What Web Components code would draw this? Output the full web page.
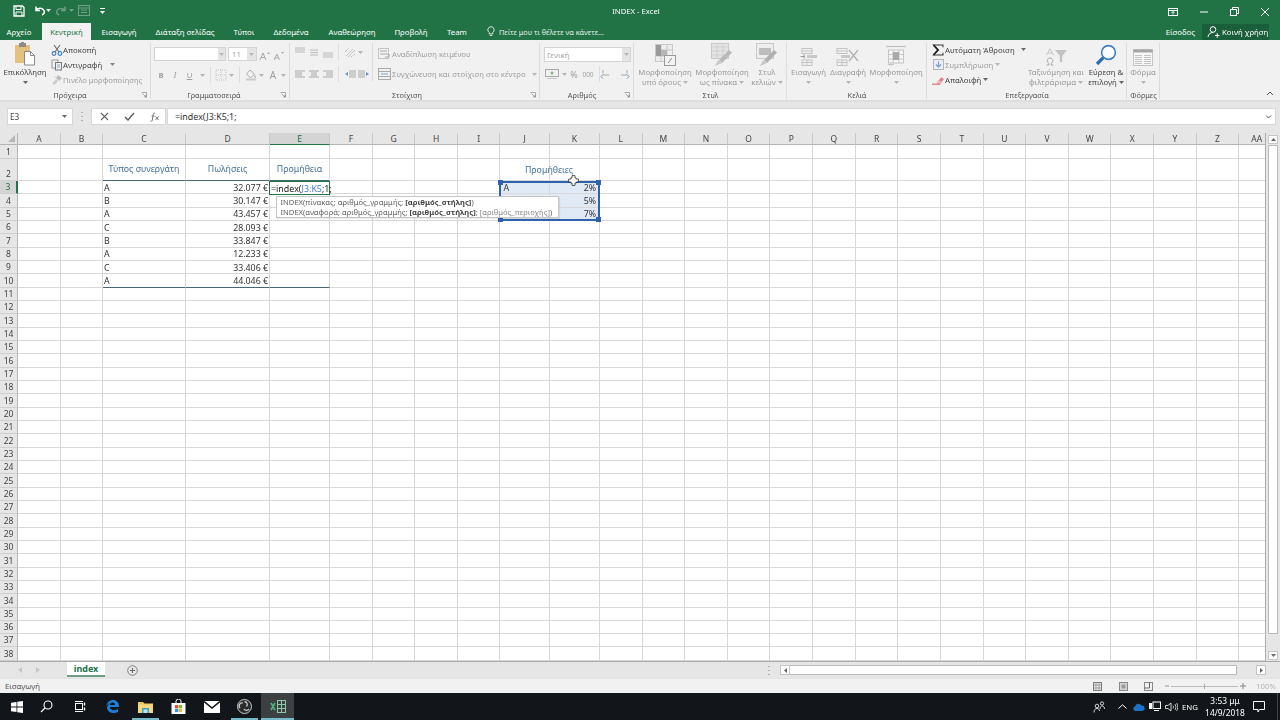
<!DOCTYPE html>
<html lang="el"><head><meta charset="utf-8"><title>INDEX - Excel</title>
<style>
html,body{margin:0;padding:0;width:1280px;height:720px;overflow:hidden;background:#f1f1f1;font-family:"Noto Sans","Liberation Sans",sans-serif}
</style></head><body>
<x-app></x-app>
<script>
const sv=(w,h,c)=>`<svg xmlns="http://www.w3.org/2000/svg" viewBox="0 0 ${w} ${h}" width="${w}" height="${h}" fill="none">${c}</svg>`;
const D='#a9a9a9',L='#c4c4c4',K='#5a5a5a';
const lines=(x1,x2,ys,c=D,sw=1)=>ys.map(y=>`<path d="M${x1} ${y}H${x2}" stroke="${c}" stroke-width="${sw}"/>`).join('');
const ICONS={
save:sv(12,12,'<path d="M1 1h8.5L11 2.5V11H1z" stroke="#fff" stroke-width="1.3"/><path d="M3 1.5v3h5v-3M3 11V7h6v4" stroke="#fff"/>'),
undo:sv(13,11,'<path d="M3 1.5v4h4M3.2 5.2C5 2.8 9.5 2.6 11 5.5c.8 2-.3 3.8-2 4.5" stroke="#fff" stroke-width="1.5"/>'),
redo:sv(13,11,'<path d="M10 1.5v4H6M9.8 5.2C8 2.8 3.5 2.6 2 5.5c-.8 2 .3 3.8 2 4.5" stroke="#6f9f84" stroke-width="1.4"/>'),
formq:sv(12,11,'<rect x=".5" y=".5" width="11" height="10" stroke="#6f9f84"/><path d="M.5 3h11M3 5h6M3 7.5h6" stroke="#6f9f84"/>'),
custom:sv(7,8,'<path d="M1 1.5h5" stroke="#fff"/><path d="M1 4h5L3.5 7z" fill="#fff"/>'),
dropw:sv(5,3,'<path d="M0 0h5L2.5 3z" fill="#e6efe9"/>'),
dropq:sv(5,3,'<path d="M0 0h5L2.5 3z" fill="#6f9f84"/>'),
drop:sv(5,3,'<path d="M0 0h5L2.5 3z" fill="#888"/>'),
dropd:sv(5,3,'<path d="M0 0h5L2.5 3z" fill="#666"/>'),
dropl:sv(5,3,'<path d="M0 0h5L2.5 3z" fill="#b5b5b5"/>'),
ribdisp:sv(10,8,'<rect x=".5" y=".5" width="9" height="7" stroke="#fff"/><path d="M.5 2.5h9" stroke="#fff"/><path d="M5 3.5v3M3.5 5 5 3.5 6.500 5" stroke="#fff" stroke-width=".9"/>'),
min:sv(10,2,'<path d="M1 1h8" stroke="#fff"/>'),
rest:sv(9,9,'<rect x=".5" y="2.500" width="6" height="6" stroke="#fff"/><path d="M2.500 2.500v-2h6v6h-2" stroke="#fff"/>'),
close:sv(10,10,'<path d="M1 1l8 8M9 1 1 9" stroke="#fff"/>'),
bulb:sv(8,11,'<path d="M4 .7a3.200 3.200 0 0 0-1.700 5.900V8h3.400V6.600A3.200 3.200 0 0 0 4 .7zM2.800 9.500h2.400" stroke="#fff" stroke-width=".8"/>'),
share:sv(13,12,'<circle cx="6" cy="3.500" r="2.800" stroke="#fff"/><path d="M1 11c.4-3 2.400-4.500 5-4.500" stroke="#fff"/><path d="M8 9.500h4.500M10.200 7.200v4.600" stroke="#fff"/>'),
paste:sv(22,24,'<rect x="1" y="3" width="15" height="18" fill="#e2c27c"/><rect x="5" y="1" width="7" height="4" fill="#8b8b8b"/><rect x="7" y="0" width="3" height="2" fill="#8b8b8b"/><path d="M10.500 9.500h6l4 4v9.500h-10z" fill="#fff" stroke="#8a8a8a"/><path d="M16.500 9.500v4h4" stroke="#8a8a8a"/>'),
cut:sv(12,12,'<path d="M3 1l5 7M9 1 4 8" stroke="#6b6b6b" stroke-width="1.100"/><circle cx="3" cy="9.500" r="1.900" stroke="#3b7cc0" stroke-width="1.100"/><circle cx="9" cy="9.500" r="1.900" stroke="#3b7cc0" stroke-width="1.100"/>'),
copy:sv(12,12,'<rect x="1" y="1" width="6" height="8" stroke="#9a9a9a"/><rect x="4.500" y="3.500" width="6" height="7.500" fill="#f1f1f1" stroke="#777"/><path d="M6 6h3M6 8h3" stroke="#8aa8c8"/>'),
brush:sv(12,12,'<path d="M7 1l4 3-3 3-3-3z" fill="#bcbcbc"/><path d="M5 5 1.500 9.500 3 11l4-3.500z" fill="#c9c9c9"/><path d="M3 3h2" stroke="#d3d3d3"/>'),
Aup:sv(11,10,`<path d="M1 9 4 2l3 7M2 6.500h4" stroke="${D}"/><path d="M8 3l1.500-2L11 3z" fill="${D}"/>`),
Adn:sv(11,10,`<path d="M1 9 3.800 3 6.500 9M2 7h3.500" stroke="${D}"/><path d="M8 1l1.500 2L11 1z" fill="${D}"/>`),
border:sv(12,12,`<rect x="1" y="1" width="10" height="10" stroke="${L}" stroke-dasharray="1 1"/><path d="M6 1v10M1 6h10" stroke="${L}" stroke-dasharray="1 1"/>`),
fill:sv(12,12,`<path d="M5 1 1.500 5 5.500 9 9.500 5z" stroke="${D}"/><path d="M10 6l1 2-1 1-1-1z" fill="${D}"/><path d="M1 10.500h10" stroke="#c9c9c9" stroke-width="2"/>`),
al1:sv(12,11,lines(1,11,[1,3,5],L,1.200)),
al2:sv(12,11,lines(2,10,[3,5.500,8],L,1.200)),
al3:sv(12,11,lines(1,11,[6,8,10],L,1.200)),
orient:sv(12,11,`<path d="M2 9 9 2M4 10l7-7" stroke="${L}"/><path d="M1 5l4-4M7 10l4-3" stroke="${D}" stroke-dasharray="1 1"/>`),
la:sv(12,9,lines(1,11,[1,7],D)+lines(1,8,[3,5],D)),
ca:sv(12,9,lines(1,11,[1,7],D)+lines(3,9,[3,5],D)),
ra:sv(12,9,lines(1,11,[1,7],D)+lines(4,11,[3,5],D)),
outd:sv(13,9,lines(5,12,[1,3,5,7],D)+'<path d="M4 2v4L1 4z" fill="#6b93bf"/>'),
ind:sv(13,9,lines(1,8,[1,3,5,7],D)+'<path d="M9 2v4l3-2z" fill="#6b93bf"/>'),
wrap:sv(13,12,`<rect x=".5" y=".5" width="10" height="10" stroke="${L}"/><path d="M2 3h7M2 6h8a1.500 1.500 0 0 1 0 3H7" stroke="${D}"/>`),
merge:sv(13,12,`<rect x=".5" y=".5" width="12" height="11" stroke="${D}"/><path d="M.5 3.500h12M.5 8.500h12" stroke="${D}"/><path d="M3 6h7" stroke="#7fa6cc"/>`),
acct:sv(14,10,`<rect x=".5" y=".5" width="13" height="7" stroke="${D}"/><circle cx="7" cy="4" r="1.500" fill="#8bb48b"/><path d="M2 9.500h10" stroke="${L}"/>`),
dec1:sv(13,10,`<path d="M3 1v3.500M3 6h6" stroke="${D}"/><path d="M1 7.500 3 9.500M1 7.500l2-2" stroke="#6b93bf"/>`),
dec2:sv(13,10,`<path d="M9 1v3.500M3 6h6" stroke="${D}"/><path d="M11 7.500 9 9.500M11 7.500l-2-2" stroke="#6b93bf"/>`),
cond:sv(21,22,`<rect x=".5" y=".5" width="17" height="17" fill="#ededed" stroke="#c8c8c8"/><path d="M6 .5v17M12 .5v17M.5 6h17M.5 12h17" stroke="#c8c8c8"/><rect x="1" y="1" width="5" height="11" fill="#9a9a9a"/><rect x="6" y="6" width="6" height="6" fill="#b5b5b5"/><rect x="9.500" y="11.500" width="11" height="10" fill="#f4f4f4" stroke="#9a9a9a"/><path d="M13 19l4-5" stroke="#8a8a8a"/>`),
tbl:sv(22,23,`<rect x=".5" y=".5" width="17" height="15" fill="#e4e4e4" stroke="#c8c8c8"/><path d="M6 .5v15M12 .5v15M.5 4h17M.5 8h17M.5 12h17" stroke="#cfcfcf"/><path d="M8 17 18 7l3 2.500L11 20z" fill="#b9b9b9"/><path d="M4 23l3-6 4 3z" fill="#c9c9c9"/>`),
cst:sv(22,23,`<rect x=".5" y=".5" width="17" height="15" fill="#eee" stroke="#c8c8c8"/><rect x="3" y="5" width="12" height="7" fill="#bdbdbd"/><path d="M8 17 18 7l3 2.500L11 20z" fill="#b0b0b0"/><path d="M4 23l3-6 4 3z" fill="#c9c9c9"/>`),
ins:sv(19,18,`<rect x="3" y=".5" width="10" height="5" stroke="${L}"/><path d="M3 3h10" stroke="${L}"/><rect x="3" y="12" width="10" height="5.500" stroke="${L}"/><path d="M8 12v5.500M3 14.500h10" stroke="${L}"/><rect x="8" y="7" width="10" height="3" fill="#c9c9c9"/><path d="M5 6.500v4M1.500 8.500H6" stroke="#9a9a9a"/>`),
del:sv(24,18,`<rect x="1" y=".5" width="10" height="5" stroke="${L}"/><path d="M1 3h10" stroke="${L}"/><rect x="1" y="12" width="10" height="5.500" stroke="${L}"/><path d="M6 12v5.500M1 14.500h10" stroke="${L}"/><rect x="5" y="7" width="9" height="3" fill="#c9c9c9"/><path d="M13 2l9 11M22 2 13 13" stroke="#b0b0b0" stroke-width="1.200"/>`),
fmt:sv(20,21,`<path d="M1 1.500h18M1 .5v2M19 .5v2M4 1.500h12" stroke="#bbb"/><rect x="2.500" y="5" width="15" height="13" fill="#f6f6f6" stroke="${L}"/><path d="M7 5v13M13 5v13M2.500 9.500h15M2.500 14h15" stroke="${L}"/><rect x="7" y="7" width="6" height="8" fill="#a8a8a8"/><path d="M2 19q3 2 6 0" stroke="#bbb"/>`),
sum:sv(12,12,'<path d="M1 1h10v2.200M11 1H1.500L6 6 1.500 11H11V8.800" stroke="#3a3a3a" stroke-width="1.100"/><path d="M1.500 1 6 6l-4.500 5" stroke="#222" stroke-width="1.800"/>'),
fildn:sv(11,11,'<rect x=".5" y=".5" width="10" height="10" fill="#e8eef6" stroke="#b5b5b5"/><path d="M5.500 2.500v5M3 5.500l2.500 2.500L8 5.500" stroke="#7d9cbf" stroke-width="1.200"/>'),
eraser:sv(13,10,'<path d="M5 8 10 2l3 2-4 5H6z" fill="#e3818c"/><path d="M5 8l2-3 3 2-1.500 2H6z" fill="#f0bcc2"/><path d="M0 9.500h9" stroke="#c94b5a"/>'),
sort:sv(23,18,`<path d="M1.500 7 5 .8 8.500 7M3 5h4" stroke="${L}"/><path d="M1.500 17h2.300v-1.500C1 13.500 2 10 5 10s4 3.500 1.200 5.500V17h2.300" stroke="${D}"/><path d="M10 2h12l-4.800 6v6h-2.400V8z" fill="#c2c2c2"/>`),
find:sv(22,22,'<circle cx="13.500" cy="8.500" r="6.900" stroke="#3f7fbf" stroke-width="1.600" fill="#fbfbfb"/><path d="M8.300 13.700 2 20" stroke="#2b6cb0" stroke-width="3.200"/>'),
form:sv(20,17,`<rect x=".5" y=".5" width="19" height="16" fill="#f7f7f7" stroke="${L}"/><rect x=".5" y=".5" width="19" height="3" fill="#a5a5a5"/>`+lines(2,9,[6.500,8.500,10.500,12.500,14.500],L)+lines(11,18,[6.500,8.500,10.500,12.500,14.500],L)),
launch:sv(6,6,'<path d="M.5.500h5v5" stroke="#aaa"/><path d="M1.500 1.500 5 5M5 3v2H3" stroke="#888" stroke-width=".7"/>'),
collapse:sv(8,5,'<path d="M1 4l3-3 3 3" stroke="#555"/>'),
x:sv(9,9,'<path d="M1 1l7 7M8 1 1 8" stroke="#666" stroke-width="1.100"/>'),
ok:sv(11,9,'<path d="M1 5l3 3 6-7" stroke="#555" stroke-width="1.300"/>'),
fx:sv(11,10,'<path d="M6 1C4.500 .7 4.300 2 4 4L3.300 8C3 9.300 2.400 9.500 1.500 9M2.500 4h3M6.500 4.500l3 3.500M9.500 4.500l-3 3.500" stroke="#666" stroke-width=".9"/>'),
chev:sv(7,4,'<path d="M1 .5l2.500 2.500L6 .5" stroke="#555"/>'),
plus:sv(11,11,'<circle cx="5.500" cy="5.500" r="4.800" stroke="#808080"/><path d="M5.500 3v5M3 5.500h5" stroke="#666"/>'),
navl:sv(4,6,'<path d="M4 0v6L0 3z" fill="#c6c6c6"/>'),
navr:sv(4,6,'<path d="M0 0v6l4-3z" fill="#c6c6c6"/>'),
dots:sv(2,9,'<path d="M0 .5h2M0 4.500h2M0 8.500h2" stroke="#b0b0b0"/>'),
upt:sv(5,3,'<path d="M0 3h5L2.500 0z" fill="#666"/>'),
dnt:sv(5,3,'<path d="M0 0h5L2.500 3z" fill="#666"/>'),
lft:sv(3,5,'<path d="M3 0v5L0 2.500z" fill="#666"/>'),
rgt:sv(3,5,'<path d="M0 0v5l3-2.500z" fill="#666"/>'),
vnorm:sv(9,9,'<rect x=".5" y=".5" width="8" height="8" stroke="#777"/><path d="M3 .5v8M6 .5v8M.5 3h8M.5 6h8" stroke="#999"/>'),
vlay:sv(9,9,'<rect x=".5" y=".5" width="8" height="8" stroke="#888" fill="#d6d6d6"/><rect x="2.500" y="2.500" width="4" height="4" fill="#999"/>'),
vbrk:sv(9,9,'<rect x=".5" y=".5" width="8" height="8" stroke="#888"/><path d="M.5 6h5V.5" stroke="#666"/>'),
zm:sv(6,6,'<path d="M1 3h4" stroke="#999"/>'),
zp:sv(6,6,'<path d="M0 3h6M3 0v6" stroke="#888"/>'),
win:sv(12,12,'<path d="M0 1.700 5.500.9v4.700H0zM6.300.8 12 0v5.600H6.300zM0 6.400h5.500v4.700L0 10.300zM6.300 6.400H12V12l-5.700-.8z" fill="#fff"/>'),
srch:sv(13,13,'<circle cx="8" cy="5" r="4" stroke="#fff" stroke-width="1.100"/><path d="M5 8 1 12" stroke="#fff" stroke-width="1.300"/>'),
tv:sv(12,11,'<rect x="1.500" y="2.500" width="7" height="6" stroke="#fff"/><path d="M1 .5h8M1 10.500h8" stroke="#fff"/><path d="M10.500 1.500v3M10.500 6.500v3" stroke="#fff" stroke-width="1.400"/>'),
edge:sv(13,13,'<path d="M.3 6C1 2 4 0 7 0c3.500 0 6 2.600 6 7H3.800c.2 3.500 5 4 8.200 1.900v3c-3.500 1.800-9.500 1.500-10.800-3-.4-1.500 0-3 1-4C3 3.500 5 3.300 5 3.300 3 3 1.500 4.300.3 6zM3.900 5H9C9 3 7.600 2.300 6.400 2.400 5.100 2.500 4.100 3.500 3.900 5z" fill="#1f7fd6"/>'),
folder:sv(15,12,'<path d="M0 1h5l1.500 1.500H15V12H0z" fill="#f1c75e"/><rect y="3.500" width="15" height="8.500" fill="#f6d67e"/><rect x="4" y="7" width="7" height="5" fill="#3aa0c8"/><rect x="5.500" y="8.500" width="4" height="3.500" fill="#bfe3ee"/>'),
store:sv(15,15,'<path d="M.5 4h14v11H.5z" fill="#fff"/><path d="M5 4V2.500a2.500 2.500 0 0 1 5 0V4" stroke="#fff"/><rect x="4" y="6" width="3.300" height="3.300" fill="#e2522f"/><rect x="7.800" y="6" width="3.300" height="3.300" fill="#7fba3a"/><rect x="4" y="9.800" width="3.300" height="3.300" fill="#2b9ae6"/><rect x="7.800" y="9.800" width="3.300" height="3.300" fill="#f5b82e"/>'),
mail:sv(16,12,'<path d="M0 0h16v12H0z" fill="#fff"/><path d="M0 .5 8 7l8-6.500" stroke="#14181b" stroke-width="1.600"/>'),
obs:sv(15,15,'<circle cx="7.500" cy="7.500" r="7" fill="#2a2a2a" stroke="#c9c9c9"/><path d="M7.500 2.500a3 3 0 0 1 2 5M12 10a3 3 0 0 1-5 0M3 9a3 3 0 0 1 3-5" stroke="#cfcfcf" stroke-width="1.300"/>'),
xl:sv(16,13,'<rect x="7.500" y=".5" width="8" height="12" stroke="#8dc9a5"/><path d="M11.500 .5v12M7.500 4.500h8M7.500 8.500h8" stroke="#8dc9a5"/><path d="M1 3l4 7M5 3l-4 7" stroke="#4fb57c" stroke-width="1.600"/>'),
people:sv(13,12,'<circle cx="4" cy="5" r="1.800" stroke="#fff" stroke-width=".8"/><path d="M1 11.500c0-3 1.300-4 3-4s2.300 1 2.600 2.500" stroke="#fff" stroke-width=".8"/><circle cx="9" cy="2.500" r="1.600" stroke="#fff" stroke-width=".8"/><path d="M7 8c0-2 1-3 2-3s2.500.7 2.500 3" stroke="#fff" stroke-width=".8"/>'),
caret:sv(9,5,'<path d="M.5 4.500 4.500.8l4 3.700" stroke="#fff"/>'),
cloud:sv(12,8,'<path d="M2.500 8A2.300 2.300 0 0 1 2 3.500 3.500 3.500 0 0 1 8.500 2.500 2.800 2.800 0 0 1 9.500 8z" fill="#1b73c8"/>'),
net:sv(12,11,'<rect x="4" y="1" width="7.500" height="6.500" stroke="#fff"/><rect x="0" y="2" width="3" height="6" fill="#fff"/><path d="M5 9.500h5" stroke="#fff"/>'),
vol:sv(13,10,'<path d="M.5 3.500H3L6 1v8L3 6.500H.5z" stroke="#fff" stroke-width=".8"/><path d="M8 3.500q1 1.500 0 3M10 2q2 3 0 6M11.800 1q2.200 4 0 8" stroke="#fff" stroke-width=".7"/>'),
notif:sv(12,12,'<path d="M.5.500h11v8H6.500L5 11 5 8.500H.5z" stroke="#fff"/>'),
mover:sv(15,15,'<path d="M5.500 1h4v3h1.500v1.500h3v4h-3V11H9.500v3h-4v-3H4V9.500H1v-4h3V4h1.500z" fill="#fff" stroke="#222" stroke-width="1"/>')
};
function def(name,css,html){
  customElements.define(name,class extends HTMLElement{
    connectedCallback(){
      if(this.shadowRoot)return;
      const r=this.attachShadow({mode:'open'});
      r.innerHTML=`<style>${css}</style>`+(typeof html==='function'?html(this):html);
    }
  });
}
def('x-ico',':host{display:inline-flex;align-items:center;justify-content:center;flex:none;line-height:0}',
  h=>ICONS[h.getAttribute('n')]||'');

const BASE=':host{font-family:"Noto Sans","Liberation Sans",sans-serif}';
/* ---------- title bar ---------- */
def('x-titlebar',BASE+`:host{display:flex;align-items:center;height:23px;background:#217346;color:#fff;font-size:8px;position:relative}
.qat{display:flex;align-items:center;padding:0 0 2px 13px;width:300px;flex:none;box-sizing:border-box}
.t{flex:1;text-align:center;font-size:7.700px;position:relative;left:-93px;top:-1px}
.win{display:flex;align-items:center;flex:none}
.win x-ico{width:30.500px}`,
`<div class="qat"><x-ico n="save" style="margin-right:8px"></x-ico><x-ico n="undo"></x-ico><x-ico n="dropw" style="margin:0 4px 0 0"></x-ico><x-ico n="redo"></x-ico><x-ico n="dropq" style="margin:0 4px 0 1px"></x-ico><x-ico n="formq" style="margin-right:9px"></x-ico><x-ico n="custom"></x-ico></div>
<div class="t">INDEX - Excel</div>
<div class="win"><x-ico n="ribdisp"></x-ico><x-ico n="min"></x-ico><x-ico n="rest"></x-ico><x-ico n="close"></x-ico></div>`);

/* ---------- tabs ---------- */
def('x-tabs',BASE+`:host{display:flex;height:17px;background:#217346;color:#fff;font-size:7.800px;align-items:stretch}
.tab{display:flex;align-items:center;justify-content:center;white-space:nowrap;flex:none;box-sizing:border-box}
.on{background:#f1f1f1;color:#217346;height:17px}
.tell{display:flex;align-items:center;gap:4px;margin-left:8px;color:#e4eee8;white-space:nowrap;font-size:7.300px}
.sp{flex:1}
.right{display:flex;align-items:center;white-space:nowrap}
.share{background:#1b5e3a;height:16px;display:flex;align-items:center;gap:2px;padding:0 5px;margin:0 11px 0 7px;box-sizing:border-box;width:67px}`,
`<div class="tab" style="width:38px;margin-right:4px">Αρχείο</div><div class="tab on" style="width:49px">Κεντρική</div><div class="tab" style="width:56px">Εισαγωγή</div><div class="tab" style="width:76px">Διάταξη σελίδας</div><div class="tab" style="width:42px">Τύποι</div><div class="tab" style="width:52px">Δεδομένα</div><div class="tab" style="width:70px">Αναθεώρηση</div><div class="tab" style="width:48px">Προβολή</div><div class="tab" style="width:44px">Team</div>
<div class="tell"><x-ico n="bulb"></x-ico><span>Πείτε μου τι θέλετε να κάνετε...</span></div><div class="sp"></div>
<div class="right"><span>Είσοδος</span><div class="share"><x-ico n="share"></x-ico><span>Κοινή χρήση</span></div></div>`);

/* ---------- ribbon group ---------- */
def('x-group',BASE+`:host{display:flex;flex-direction:column;flex:none;height:60px;box-sizing:border-box;position:relative}
.b{height:49px;display:flex;overflow:visible}
.l{height:11px;line-height:13px;font-size:7.400px;color:#555;text-align:center;white-space:nowrap}
.sep{position:absolute;right:0;top:3px;bottom:1px;width:1px;background:#dcdcdc}
.lz{position:absolute;right:4px;bottom:2px}`,
h=>`<div class="b"><slot></slot></div><div class="l" style="transform:translateX(${h.getAttribute('off')||0}px)">${h.getAttribute('label')}</div><div class="sep"></div>${h.hasAttribute('launch')?'<x-ico class="lz" n="launch"></x-ico>':''}`);

/* large ribbon button */
def('x-big',BASE+`:host{display:flex;flex-direction:column;align-items:center;flex:none;font-size:7.800px;color:#9a9a9a}
.i{height:27px;display:flex;align-items:flex-end;justify-content:center;padding-bottom:1px;box-sizing:border-box;width:100%}
.t{line-height:10px;white-space:nowrap;text-align:center;display:flex;align-items:center;justify-content:center;gap:2px;height:10px}
:host([dark]){color:#444}`,
h=>{const d=h.hasAttribute('dark')?'dropd':'dropl';const a=(h.getAttribute('t')||'').split('|');
 const second=h.getAttribute('arrow')==='alone'?`<div class="t"><x-ico n="${d}"></x-ico></div>`:`<div class="t"><span>${a[1]||''}</span><x-ico n="${d}"></x-ico></div>`;
 return `<div class="i"><x-ico n="${h.getAttribute('n')}"></x-ico></div><div class="t"><span>${a[0]}</span></div>${second}`;});

/* ribbon */
def('x-ribbon',BASE+`:host{display:flex;height:60px;background:#f1f1f1;position:relative;font-size:7.800px;color:#444}
.rows{display:flex;flex-direction:column;padding-top:2px}
.row{display:flex;align-items:center;height:15px;white-space:nowrap}
.row x-ico.f{width:12px}
.dim{color:#a0a0a0}
.r22{display:flex;flex-direction:column;padding-top:1px}
.r{display:flex;align-items:center;height:22px;white-space:nowrap;color:#a0a0a0}
.c{display:inline-flex;align-items:center;justify-content:center;flex:none}
.box{background:#fff;border:1px solid #d4d4d4;height:14px;box-sizing:border-box;display:flex;align-items:center;flex:none;justify-content:space-between;color:#a5a5a5}
.ar{background:#e4e4e4;width:7px;height:100%;display:flex;align-items:center;justify-content:center}
.vs{width:1px;height:16px;background:#dcdcdc;flex:none}
.bold{font-weight:700}
.col{position:absolute;right:6px;bottom:4px}`,
`
<x-group label="Πρόχειρα" off="-5.500" launch style="width:151px">
  <x-big n="paste" t="Επικόλληση|" arrow="alone" dark style="width:50px"></x-big>
  <div class="rows" style="margin-left:1px">
    <div class="row"><x-ico class="f" n="cut"></x-ico>Αποκοπή</div>
    <div class="row"><x-ico class="f" n="copy"></x-ico>Αντιγραφή<x-ico n="drop" style="margin-left:8px"></x-ico></div>
    <div class="row dim" style="font-size:7.600px"><x-ico class="f" n="brush"></x-ico>Πινέλο μορφοποίησης</div>
  </div>
</x-group>
<x-group label="Γραμματοσειρά" off="-6.500" launch style="width:139px">
  <div class="r22" style="padding-left:3px">
    <div class="r" style="align-items:flex-end;height:22px;padding-bottom:2px;box-sizing:border-box">
      <div class="box" style="width:72px"><span></span><span class="ar"><x-ico n="dropl"></x-ico></span></div>
      <div class="box" style="width:29px;margin-left:2px;padding-left:3px"><span>11</span><span class="ar" style="width:9px"><x-ico n="dropl"></x-ico></span></div>
      <x-ico n="Aup" style="width:14px"></x-ico><x-ico n="Adn" style="width:14px"></x-ico>
    </div>
    <div class="r" style="height:24px">
      <span class="c bold" style="width:14px">B</span><span class="c" style="width:14px;font-style:italic;font-family:'Liberation Serif',serif;font-size:9px">I</span><span class="c" style="width:15px;text-decoration:underline">U</span><x-ico n="dropl" style="margin:0 3px"></x-ico><span class="vs" style="margin:0 4px 0 2px"></span><x-ico n="border"></x-ico><x-ico n="dropl" style="margin:0 3px 0 2px"></x-ico><span class="vs" style="margin:0 5px 0 2px"></span><x-ico n="fill"></x-ico><x-ico n="dropl" style="margin:0 5px 0 2px"></x-ico><span class="c" style="font-size:10px;width:8px">A</span><x-ico n="dropl" style="margin-left:4px"></x-ico>
    </div>
  </div>
</x-group>
<x-group label="Στοίχιση" off="-8" launch style="width:250px">
  <div class="r22" style="width:82px;padding-left:3px;box-sizing:border-box">
    <div class="r"><x-ico n="al1" style="width:14px"></x-ico><x-ico n="al2" style="width:14px"></x-ico><x-ico n="al3" style="width:14px"></x-ico><span class="vs" style="margin:0 5px 0 3px"></span><x-ico n="orient"></x-ico><x-ico n="dropl" style="margin-left:2px"></x-ico></div>
    <div class="r"><x-ico n="la" style="width:14px"></x-ico><x-ico n="ca" style="width:14px"></x-ico><x-ico n="ra" style="width:14px"></x-ico><span class="vs" style="margin:0 5px 0 3px"></span><x-ico n="outd"></x-ico><x-ico n="ind"></x-ico></div>
  </div>
  <span class="vs" style="height:38px;margin-top:3px"></span>
  <div class="r22" style="padding-left:5px;font-size:7.700px">
    <div class="r" style="padding-top:3px;box-sizing:border-box"><x-ico n="wrap" style="margin-right:1px"></x-ico>Αναδίπλωση κειμένου</div>
    <div class="r"><x-ico n="merge" style="margin-right:1px"></x-ico>Συγχώνευση και στοίχιση στο κέντρο<x-ico n="dropl" style="margin-left:6px"></x-ico></div>
  </div>
</x-group>
<x-group label="Αριθμός" off="-5" launch style="width:94px">
  <div class="r22" style="padding-left:4px">
    <div class="r" style="align-items:flex-end;height:21px;margin-bottom:1px">
      <div class="box" style="width:87px;height:15px;padding-left:2px"><span>Γενική</span><span class="ar" style="width:8px"><x-ico n="dropl"></x-ico></span></div>
    </div>
    <div class="r"><x-ico n="acct" style="margin-left:1px"></x-ico><x-ico n="dropl" style="margin:0 1px 0 3px"></x-ico><span class="c" style="font-size:9px;width:12px">%</span><span class="c" style="width:16px;font-size:6.500px">000</span><span class="vs" style="margin:0 0 0 3px"></span><x-ico n="dec1"></x-ico><x-ico n="dec2" style="margin-left:5px"></x-ico></div>
  </div>
</x-group>
<x-group label="Στυλ" off="-1" style="width:153px;padding-left:2px">
  <x-big n="cond" t="Μορφοποίηση|υπό όρους" style="width:58px"></x-big>
  <x-big n="tbl" t="Μορφοποίηση|ως πίνακα" style="width:56px"></x-big>
  <x-big n="cst" t="Στυλ|κελιών" style="width:34px"></x-big>
</x-group>
<x-group label="Κελιά" off="-.5" style="width:140px;padding-left:1px">
  <x-big n="ins" t="Εισαγωγή|" arrow="alone" style="width:41px"></x-big>
  <x-big n="del" t="Διαγραφή|" arrow="alone" style="width:38px"></x-big>
  <x-big n="fmt" t="Μορφοποίηση|" arrow="alone" style="width:58px"></x-big>
</x-group>
<x-group label="Επεξεργασία" off="-2.500" style="width:200px;padding-left:5px">
  <div class="rows" style="width:93px">
    <div class="row"><x-ico class="f" n="sum" style="margin-right:1px"></x-ico>Αυτόματη Άθροιση<x-ico n="dropd" style="margin-left:6px"></x-ico></div>
    <div class="row dim"><x-ico class="f" n="fildn" style="margin-right:1px"></x-ico>Συμπλήρωση<x-ico n="dropl" style="margin-left:2px"></x-ico></div>
    <div class="row"><x-ico class="f" n="eraser" style="margin-right:1px"></x-ico>Απαλοιφή<x-ico n="dropd" style="margin-left:2px"></x-ico></div>
  </div>
  <x-big n="sort" t="Ταξινόμηση και|φιλτράρισμα" style="width:62px"></x-big>
  <x-big n="find" t="Εύρεση &amp;|επιλογή" dark style="width:38px"></x-big>
</x-group>
<x-group label="Φόρμες" style="width:33px">
  <x-big n="form" t="Φόρμα|" arrow="alone" style="width:32px"></x-big>
</x-group>
<x-ico class="col" n="collapse"></x-ico>`);

/* ---------- formula bar ---------- */
def('x-formula',BASE+`:host{display:flex;height:33px;background:#e6e6e6;box-sizing:border-box;padding:6px 4px 8px 7px;font-size:8.300px;color:#444;border-top:2px solid #dedede}
.b{background:#fff;border:1px solid #d6d6d6;box-sizing:border-box;height:17px;display:flex;align-items:center;flex:none}
.name{width:66px;padding:0 5px 0 2px;justify-content:space-between}
.dots{width:18px;display:flex;align-items:center;justify-content:center;flex:none}
.fx{width:75px;margin-right:1px}
.fx x-ico{width:25px}
.f{flex:1;padding:0 3px 0 7px;justify-content:space-between;color:#333;font-size:8.900px}`,
`<div class="b name"><span>E3</span><x-ico n="dnt"></x-ico></div><div class="dots"><x-ico n="dots"></x-ico></div>
<div class="b fx"><x-ico n="x"></x-ico><x-ico n="ok"></x-ico><x-ico n="fx"></x-ico></div>
<div class="b f"><span>=index(J3:K5;1;</span><x-ico n="chev"></x-ico></div>`);

/* ---------- sheet grid ---------- */
const COLS=[['A',43],['B',42],['C',83],['D',84],['E',60],['F',42.8],['G',42.6],['H',42.6],['I',42.5],['J',49.5],['K',50]];
'LMNOPQRSTUVWXYZ'.split('').forEach(c=>COLS.push([c,42.64]));COLS.push(['AA',42.67]);
const CELLS={'C2':['Τύπος συνεργάτη','h'],'D2':['Πωλήσεις','h'],'E2':['Προμήθεια','h'],
 C3:['A'],D3:['32.077 €','n'],C4:['B'],D4:['30.147 €','n'],C5:['A'],D5:['43.457 €','n'],C6:['C'],D6:['28.093 €','n'],C7:['B'],D7:['33.847 €','n'],C8:['A'],D8:['12.233 €','n'],C9:['C'],D9:['33.406 €','n'],C10:['A'],D10:['44.046 €','n'],
 J3:['A','pl'],K3:['2%','n pr'],K4:['5%','n pr'],K5:['7%','n pr']};
def('x-sheet',BASE+`:host{display:block;position:relative;overflow:hidden;width:1266px;height:528px;background:#fff;font-size:8.800px;color:#333;flex:none;box-sizing:border-box;border-right:1px solid #ababab}
.g{display:grid;grid-template-columns:18px ${COLS.map(c=>c[1]+'px').join(' ')};grid-template-rows:12px 13.500px 22.500px repeat(36,13.333px);width:max-content}
.hd{background:#e6e6e6;color:#444;font-size:8.500px;display:flex;align-items:center;justify-content:center;box-sizing:border-box;border-right:1px solid #c8c8c8;border-bottom:1px solid #b5b5b5;overflow:hidden}
.rh{background:#e6e6e6;color:#444;font-size:8.500px;display:flex;align-items:flex-end;justify-content:center;box-sizing:border-box;border-right:1px solid #b5b5b5;border-bottom:1px solid #cfcfcf;line-height:12px}
.sel{background:#d4d4d4;color:#1f6b41}
.c-top{border-bottom:1.500px solid #217346}
.rsel{background:#d4d4d4;color:#1f6b41;border-right:2px solid #217346}
.cell{box-sizing:border-box;border-right:1px solid #d8d8d8;border-bottom:1px solid #d8d8d8;display:flex;align-items:center;padding:1px 1px 0;white-space:nowrap;min-width:0}
.corner{background:#e6e6e6;border-right:1px solid #b5b5b5;border-bottom:1px solid #b5b5b5;box-sizing:border-box;position:relative}
.corner:after{content:"";position:absolute;right:2px;bottom:2px;border-left:7px solid transparent;border-bottom:7px solid #b7b7b7}
.n{justify-content:flex-end}
.pr{padding-right:3px}
.pl{padding-left:3px}
.h{justify-content:center;color:#44709e;align-items:flex-end;padding-bottom:5px}
.rule{border-bottom:1.500px solid #4a6670}
.rng{background:#e0e9f6}
.active{position:absolute;left:269px;top:48px;width:61px;height:14px;box-sizing:border-box;border:1.500px solid #217346;display:flex;align-items:center;white-space:nowrap;padding-left:1px;color:#222;font-size:8.900px;background:#fff}
.active i{font-style:normal;color:#4a7ac8}
.range{position:absolute;left:498.500px;top:47.500px;width:101.500px;height:40.500px;box-sizing:border-box;border:2px solid #2f62a8}
.range b{position:absolute;width:5px;height:5px;background:#2f62a8}
.tip{position:absolute;left:275.500px;top:63px;width:283px;height:22px;box-sizing:border-box;background:#fff;border:1px solid #c6c6c6;color:#5f5f5f;font-size:7.600px;padding:0 4px;line-height:10px;white-space:nowrap;box-shadow:1px 1px 1px rgba(0,0,0,.08)}
.tip b{color:#444}
.tip span{color:#8a8a8a}
.j2{position:absolute;left:499px;top:26px;width:100px;height:22px;display:flex;align-items:flex-end;justify-content:center;padding-bottom:5px;box-sizing:border-box;color:#44709e}
.cur{position:absolute;left:565.500px;top:39.500px;transform:scale(.75)}`,
()=>{
 let h='<div class="g"><div class="corner"></div>';
 COLS.forEach(c=>{h+=`<div class="hd${c[0]==='E'?' sel c-top':''}"${c[0]==='AA'?' style="justify-content:flex-start;padding-left:12px"':''}>${c[0]}</div>`;});
 for(let r=1;r<=38;r++){
  h+=`<div class="rh${r===3?' rsel':''}">${r}</div>`;
  COLS.forEach(c=>{
   const k=c[0]+r,v=CELLS[k];let cl='cell';
   if(v&&v[1])cl+=' '+v[1];
   if((r===2||r===10)&&'CDE'.includes(c[0]))cl+=' rule';
   if(r>=3&&r<=5&&(c[0]==='J'||c[0]==='K'))cl+=' rng';
   h+=`<div class="${cl}">${v?v[0]:''}</div>`;
  });
 }
 h+='</div>';
 h+='<div class="j2">Προμήθειες</div>';
 h+='<div class="range"><b style="left:-3px;top:-3px"></b><b style="right:-3px;top:-3px"></b><b style="left:-3px;bottom:-3px"></b><b style="right:-3px;bottom:-3px"></b></div>';
 h+='<div class="active">=index(<i>J3:K5</i>;1;</div>';
 h+='<div class="tip"><div>INDEX(πίνακας; αριθμός_γραμμής; <b>[αριθμός_στήλης]</b>)</div><div>INDEX(αναφορά; αριθμός_γραμμής; <b>[αριθμός_στήλης]</b>; <span>[αριθμός_περιοχής]</span>)</div></div>';
 h+='<x-ico class="cur" n="mover"></x-ico>';
 return h;
});
def('x-vscroll',`:host{display:flex;flex-direction:column;align-items:center;width:14px;height:528px;background:#e6e6e6;box-sizing:border-box;padding:2px 0 1px;flex:none}
.a{width:10px;height:9px;box-sizing:border-box;background:#fff;border:1px solid #c6c6c6;display:flex;align-items:center;justify-content:center;flex:none}
.t{width:10px;height:489px;background:#fff;border:1px solid #bbb;box-sizing:border-box;margin-top:1px;flex:none}
.s{flex:1}`,
`<div class="a"><x-ico n="upt"></x-ico></div><div class="t"></div><div class="s"></div><div class="a"><x-ico n="dnt"></x-ico></div>`);

/* ---------- sheet tabs ---------- */
def('x-sheetbar',BASE+`:host{display:flex;align-items:stretch;height:17px;background:#e6e6e6;border-top:1px solid #a8a8a8;box-sizing:border-box;font-size:9px}
.nav{display:flex;align-items:center;gap:14px;width:67px;box-sizing:border-box;padding-left:18px;flex:none}
.tab{width:38px;height:15px;background:#fff;border-bottom:2px solid #6f9d84;box-sizing:border-box;color:#217346;font-weight:700;display:flex;align-items:center;justify-content:center;flex:none}
.add{margin-left:22px;display:flex;align-items:center;flex:none}
.dots{margin-left:630px;display:flex;align-items:center;flex:none}
.h{display:flex;align-items:center;margin-left:10px;flex:none}
.a{width:10px;height:10px;box-sizing:border-box;background:#fff;border:1px solid #c6c6c6;display:flex;align-items:center;justify-content:center}
.t{width:447px;height:10px;background:#fff;border:1px solid #bbb;border-left:none;box-sizing:border-box}
.g{width:19px}`,
`<div class="nav"><x-ico n="navl"></x-ico><x-ico n="navr"></x-ico></div><div class="tab">index</div><div class="add"><x-ico n="plus"></x-ico></div><div class="dots"><x-ico n="dots"></x-ico></div>
<div class="h"><div class="a"><x-ico n="lft"></x-ico></div><div class="t"></div><div class="g"></div><div class="a"><x-ico n="rgt"></x-ico></div></div>`);

/* ---------- status ---------- */
def('x-status',BASE+`:host{display:flex;align-items:center;height:15px;background:#f1f1f1;font-size:7.800px;color:#555;padding:0 6px 0 5px;border-top:1px solid #e4e4e4;box-sizing:border-box}
.sp{flex:1}
.r{display:flex;align-items:center}
.sl{width:67px;height:1px;background:#bdbdbd;position:relative;margin:0 0 0 1px}
.sl:after{content:"";position:absolute;left:33px;top:-2px;width:1px;height:5px;background:#aaa}
.z{color:#b5b5b5;width:18px;text-align:right;margin-left:10px}`,
`<span>Εισαγωγή</span><div class="sp"></div><div class="r"><x-ico n="vnorm"></x-ico><x-ico n="vlay" style="margin-left:17px"></x-ico><x-ico n="vbrk" style="margin-left:16px"></x-ico><x-ico n="zm" style="margin-left:11px"></x-ico><div class="sl"></div><x-ico n="zp" style="margin-left:2px"></x-ico><span class="z">100%</span></div>`);

/* ---------- taskbar ---------- */
def('x-taskbar',BASE+`:host{display:flex;align-items:stretch;height:27px;background:#12161a;color:#fff;font-size:8.400px}
.s{display:flex;align-items:center;justify-content:center;width:33px;flex:none;box-sizing:border-box}
.run{background:linear-gradient(#76b9c8,#76b9c8) center bottom/27px 2px no-repeat}
.act{background:#3c4042 linear-gradient(#76b9c8,#76b9c8) center bottom/100% 2px no-repeat}
.sp{flex:1}
.tray{display:flex;align-items:center;flex:none;padding-right:2px}
.clock{text-align:center;line-height:11.500px;font-size:8.400px;width:50px;margin-left:1px}
.eng{font-size:7.800px;margin-left:4px;width:17px}
.end{width:1px;height:100%;background:#444;margin-left:12px}`,
`<div class="s"><x-ico n="win"></x-ico></div><div class="s" style="margin-left:-3px"><x-ico n="srch"></x-ico></div><div class="s"><x-ico n="tv"></x-ico></div><div class="s"><x-ico n="edge"></x-ico></div><div class="s run"><x-ico n="folder"></x-ico></div><div class="s"><x-ico n="store"></x-ico></div><div class="s"><x-ico n="mail"></x-ico></div><div class="s run"><x-ico n="obs"></x-ico></div><div class="s act"><x-ico n="xl"></x-ico></div>
<div class="sp"></div>
<div class="tray"><x-ico n="people" style="margin-right:12px"></x-ico><x-ico n="caret" style="margin-right:6px"></x-ico><x-ico n="cloud" style="margin-right:4px"></x-ico><x-ico n="net" style="margin-right:4px"></x-ico><x-ico n="vol"></x-ico><span class="eng">ENG</span><div class="clock"><div>3:53 μμ</div><div>14/9/2018</div></div><x-ico n="notif" style="margin-left:3px"></x-ico><div class="end"></div></div>`);

/* ---------- app ---------- */
def('x-app',`:host{display:flex;flex-direction:column;width:1280px;height:720px;overflow:hidden;filter:blur(.3px)}
.mid{display:flex;height:528px;flex:none;background:#e6e6e6}`,
`<x-titlebar></x-titlebar><x-tabs></x-tabs><x-ribbon></x-ribbon><x-formula></x-formula><div class="mid"><x-sheet></x-sheet><x-vscroll></x-vscroll></div><x-sheetbar></x-sheetbar><x-status></x-status><x-taskbar></x-taskbar>`);
</script>
</body></html>
